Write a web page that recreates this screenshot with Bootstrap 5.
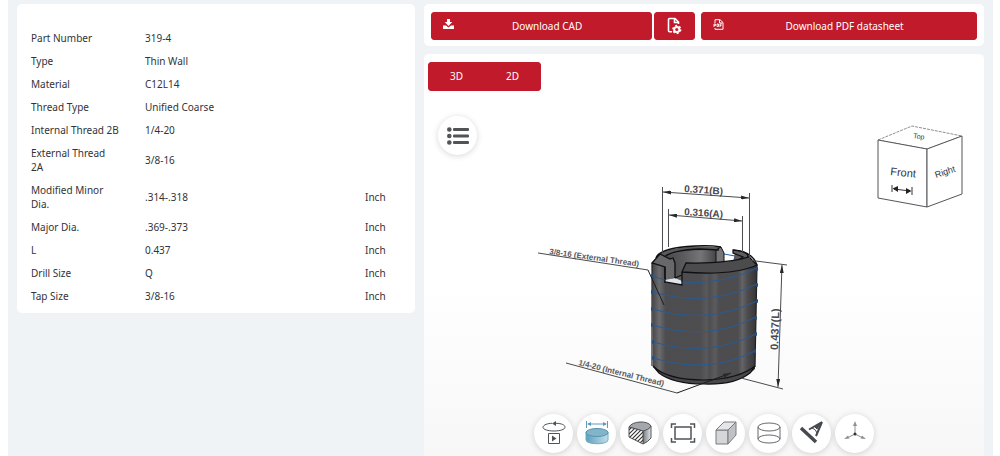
<!DOCTYPE html>
<html lang="en">
<head>
<meta charset="utf-8">
<meta name="viewport" content="width=device-width, initial-scale=1">
<title>Part 319-4</title>
<link rel="stylesheet" href="https://cdn.jsdelivr.net/npm/bootstrap@5.3.0/dist/css/bootstrap.min.css">
<style>
body{font:10px/14px "Noto Sans","Open Sans",sans-serif;color:#333337;background:#fff;padding:0 7px 0 8px}
.page-shell{background:#f0f3f6;min-height:100vh;padding:4px 9px 0;gap:9px}
.spec-pane{flex:0 0 41.16%;padding:23px 14px 5px;border-radius:5px}
.model-pane{flex:1 1 0;min-width:0;gap:8px}
.spec-table{width:100%;table-layout:fixed;color:inherit}
.spec-table th,.spec-table td{font-weight:400;padding:4px 0 5px;vertical-align:middle}
.spec-table .name-col{width:114px}
.spec-table th{padding-right:28px}
.spec-table .unit-col{width:36px}
.red-btn{--bs-btn-color:#fff;--bs-btn-bg:#c01a2b;--bs-btn-border-color:#c01a2b;--bs-btn-hover-color:#fff;--bs-btn-hover-bg:#a81323;--bs-btn-active-bg:#a81323;--bs-btn-active-color:#fff;--bs-btn-font-size:10px;--bs-btn-line-height:14px;--bs-btn-padding-y:6px;--bs-btn-padding-x:11px;--bs-btn-border-radius:3px}
.download-bar{padding:8px 7px 6px;border-radius:5px;gap:6px}
.cad-group{flex:0 0 48.4%;gap:2px}
.gear-btn{width:41px}
.viewer{border-radius:5px 5px 0 0;background:linear-gradient(#fff 55%,#f7f7f8)}
.viewer-tabs{padding:8px 4px 0}
.viewer-tabs .red-btn{width:57px;--bs-btn-line-height:15px;--bs-btn-padding-x:0}
.round-btn{width:39px;height:39px;padding:0;border:0;border-radius:50%;background:#fff;box-shadow:0 1px 6px rgba(0,0,0,.16)}
.menu-btn{left:14px;top:25px}
.view-cube{right:20px;top:34px}
.view-tools{bottom:3px;gap:4px}
svg text{font-family:"Liberation Sans",sans-serif}
.dim-text{font-weight:700;font-size:10px;fill:#48484c}
.length-text{font-size:11px}
.note-text{font-weight:700;font-size:8px;fill:#58585c}
</style>
</head>
<body>
<main class="page-shell d-flex align-items-start">
<section class="spec-pane bg-white">
<table class="spec-table">
<colgroup><col class="name-col"><col><col class="unit-col"></colgroup>
<tbody>
<tr><th scope="row">Part Number</th><td>319-4</td><td></td></tr>
<tr><th scope="row">Type</th><td>Thin Wall</td><td></td></tr>
<tr><th scope="row">Material</th><td>C12L14</td><td></td></tr>
<tr><th scope="row">Thread Type</th><td>Unified Coarse</td><td></td></tr>
<tr><th scope="row" class="text-nowrap">Internal Thread 2B</th><td>1/4-20</td><td></td></tr>
<tr><th scope="row">External Thread 2A</th><td>3/8-16</td><td></td></tr>
<tr><th scope="row">Modified Minor Dia.</th><td>.314-.318</td><td>Inch</td></tr>
<tr><th scope="row">Major Dia.</th><td>.369-.373</td><td>Inch</td></tr>
<tr><th scope="row">L</th><td>0.437</td><td>Inch</td></tr>
<tr><th scope="row">Drill Size</th><td>Q</td><td>Inch</td></tr>
<tr><th scope="row">Tap Size</th><td>3/8-16</td><td>Inch</td></tr>
</tbody>
</table>
</section>

<section class="model-pane d-flex flex-column">
<div class="download-bar bg-white d-flex">
<div class="cad-group d-flex">
<button type="button" class="btn red-btn d-flex flex-grow-1">
<svg width="11" height="11" viewBox="0 0 11 11" fill="#fff" aria-hidden="true"><path d="M4 0h3v3h2.3L5.500 7 1.700 3H4z"/><path d="M0 6.500h3l2.500 2 2.500-2h3V10H0z"/></svg>
<span class="flex-grow-1">Download CAD</span></button>
<button type="button" class="btn red-btn gear-btn p-0" aria-label="CAD settings">
<svg width="15" height="18" viewBox="0 0 15 18" fill="none" stroke="#fff" aria-hidden="true"><path d="M5 14.800H2.500q-1 0-1-1V2.500q0-1 1-1H8l3.500 3.500v2M7.500 1.500V5.500h4" stroke-width="1.600"/><circle cx="9.800" cy="12.500" r="2.600" stroke-width="2"/><circle cx="9.800" cy="12.500" r="3.900" stroke-width="1.500" stroke-dasharray="2 2.080"/></svg></button>
</div>
<button type="button" class="btn red-btn d-flex flex-grow-1">
<svg width="11" height="11" viewBox="0 0 11 11" fill="none" stroke="#fff" aria-hidden="true"><path d="M2 4V.700h5L10 3.500v6.800H2V9M6.500 1v3h3"/><path d="M1 5v3M1 5h1.500v1.500H1M4 5v2.500h1.500V5zM7 8V5h1.800M7 6.500h1.500" stroke-width=".9"/></svg>
<span class="flex-grow-1">Download PDF datasheet</span></button>
</div>

<div class="viewer">
<div class="viewer-tabs"><div class="btn-group d-flex" role="group" aria-label="View mode">
<button type="button" class="btn red-btn flex-grow-0">3D</button><button type="button" class="btn red-btn flex-grow-0">2D</button></div></div>
<div class="position-relative">
<svg class="d-block w-100" viewBox="424 91 560 365" role="img" aria-label="Threaded insert with dimensions">
<defs>
<linearGradient id="steel"><stop offset="0" stop-color="#454547"/><stop offset=".07" stop-color="#6c6c6e"/><stop offset=".13" stop-color="#4d4d50"/><stop offset=".46" stop-color="#4e4e51"/><stop offset=".52" stop-color="#59595c"/><stop offset=".55" stop-color="#4e4e51"/><stop offset=".6" stop-color="#5c5c5f"/><stop offset=".64" stop-color="#4d4d50"/><stop offset=".82" stop-color="#4d4d50"/><stop offset=".86" stop-color="#646467"/><stop offset=".91" stop-color="#4c4c4f"/><stop offset="1" stop-color="#343437"/></linearGradient>
<linearGradient id="bore"><stop offset="0" stop-color="#48484a"/><stop offset=".35" stop-color="#5a5a5d"/><stop offset=".7" stop-color="#757578"/><stop offset="1" stop-color="#464649"/></linearGradient>
<marker id="tip" viewBox="0 0 8 4" refX="8" refY="2" markerWidth="8" markerHeight="4" markerUnits="userSpaceOnUse" orient="auto-start-reverse"><path d="M0 0 8 2 0 4z" fill="#28282b"/></marker>
</defs>
<!-- bore and rear rim -->
<path d="M652 263 662 252Q686 244 721 247L724 253V262L733 263 732 251Q746 250 750 257L757 265 740 282H665z" fill="#59595c"/>
<path d="M665 257Q684 249 716 250L716 262 688 264 684 274 674 279 674 262z" fill="url(#bore)"/>
<path d="M721 247 724 253V262L733 263 735 252 730 245z" fill="#fff"/>
<path d="M724 254 735 256" stroke="#2762a5"/>
<path d="M716 250 721 247 724 253V263H716z" fill="#77777a" stroke="#111"/>
<path d="M733 250Q747 251 748 256 748 259 742 262L737 261 743 257 733 253z" fill="#5c5c5f" stroke="#111" stroke-width="1.200"/>
<path d="M656 258Q659 248 695 246 710 245 721 247M663 258Q671 250 700 249L719 250M733 250Q752 251 757 265" fill="none" stroke="#101012" stroke-width="1.400"/>
<!-- body -->
<path d="M652 263 665 267V282L682 285V272Q730 276 757 265L755 369Q743 382 710 384 670 383 653 367z" fill="url(#steel)"/>
<path d="M653 366Q667 380 704 380 739 379 755 366L750 373Q735 385 704 384 673 384 659 373z" fill="#48484b" stroke="#121214" stroke-width="1.200"/>
<path d="M652 263V366M757 265 755 367" stroke="#202024" stroke-width="1.200"/>
<!-- front chamfer -->
<path d="M682 272 686 263Q726 264 749 257L757 265Q733 276 682 272z" fill="#4c4c4f" stroke="#101012" stroke-width="1.300"/>
<path d="M652 263 660 254 670 259 673 258 675 263V278L665 282V267z" fill="#68686b" stroke="#101012" stroke-width="1.300"/>
<path d="M665 280 675 278 682 281V285L665 282z" fill="#dfe4e8"/>
<path d="M665 267V282L682 285V272M675 278 682 275" fill="none" stroke="#101012" stroke-width="1.300"/>
<!-- thread helix -->
<g fill="none" stroke="#275a96"><path d="M652 276 665 280M682 283Q730 283 757 268"/>
<path d="M652 292Q708 308 757 284M652 309Q708 325 757 301M652 325Q708 342 756 317M653 342Q708 358 756 334M653 358Q708 375 755 351"/></g>
<path fill="none" stroke="#234f86" stroke-width="2" stroke-linecap="round" d="M652 275v2M652 291v2M652 308v2M652 324v2M653 341v2M653 357v2M757 268v2M757 284v2M757 300v2M756 317v2M756 333v2M755 350v2"/>
<!-- dimension lines -->
<g fill="none" stroke="#4a4a4e"><path d="M662.500 187V253M749.500 193V262M668.500 209V247M742.500 216V252M748 260 787 265M741 378 783 389M538 253 648 270M566 363 677 393"/>
<path d="M663 192 749 198" marker-start="url(#tip)" marker-end="url(#tip)"/>
<path d="M669 215 742 221" marker-start="url(#tip)" marker-end="url(#tip)"/>
<path d="M782 265 778 387" marker-start="url(#tip)" marker-end="url(#tip)"/>
<path d="M648 270 664 305" stroke="#1c1c1f"/><path d="M677 393 731 373" stroke="#1c1c1f" marker-end="url(#tip)"/></g>
<g class="dim-text"><text transform="translate(684 192) rotate(4)">0.371(B)</text><text transform="translate(684 215) rotate(4)">0.316(A)</text><text class="length-text" transform="translate(778 350) rotate(-88)">0.437(L)</text></g>
<g class="note-text"><text transform="translate(549 254) rotate(8)">3/8-16 (External Thread)</text><text transform="translate(578 365) rotate(14)">1/4-20 (Internal Thread)</text></g>
</svg>

<button type="button" class="round-btn menu-btn position-absolute" aria-label="Menu"><svg width="22" height="18" viewBox="0 0 22 18" aria-hidden="true"><g fill="#505458"><circle cx="2.300" cy="2.500" r="2.300"/><circle cx="2.300" cy="9" r="2.300"/><circle cx="2.300" cy="15.500" r="2.300"/><rect x="6" y="1" width="16" height="3" rx="1"/><rect x="6" y="7.500" width="16" height="3" rx="1"/><rect x="6" y="14" width="16" height="3" rx="1"/></g></svg></button>

<svg class="view-cube position-absolute" width="88" height="84" viewBox="876 125 88 84" role="img" aria-label="View cube">
<path d="M878 140 912 126 962 136 927 149z" fill="#fff" stroke="#909094" stroke-dasharray="3 1"/><path d="M878 140 927 149V207L878 198z" fill="#fff" stroke="#55555a"/><path d="M927 149 962 136V194L927 207z" fill="#fff" stroke="#55555a"/>
<g fill="#333338"><text transform="translate(890 175) rotate(6)" font-size="11">Front</text><text transform="translate(936 178) rotate(-18)" font-size="9">Right</text><text transform="translate(913 138) rotate(8)" font-size="7">Top</text></g>
<path d="M892 185V192M912 187V195M894 189 910 191" stroke="#333338"/><path d="M892.500 188.500 898 186V192zM911.500 191 906 188V194z" fill="#222"/></svg>

<div class="view-tools position-absolute start-0 end-0 d-flex justify-content-center">
<button type="button" class="round-btn" aria-label="Animate"><svg width="26" height="26" viewBox="0 0 26 26" fill="none" stroke="#505458"><path d="M15 3.300C21 3.500 24 5 24 7.200 24 9.500 19 11 13 11S2 9.500 2 7.200 7 3.300 11 3.300"/><path d="M15 1v5l-4-2.500zM11 15.500 15.500 18.500 11 21.500z" fill="#505458" stroke="none"/><path d="M7.500 13.500h11v10h-11z"/></svg></button>
<button type="button" class="round-btn" aria-label="Dimensions"><svg width="26" height="26" viewBox="0 0 26 26" fill="none"><defs><linearGradient id="disc"><stop stop-color="#5f9fbc"/><stop offset="1" stop-color="#c0dfeb"/></linearGradient></defs><path d="M2 12V20C2 25 24 25 24 20V12z" fill="url(#disc)" stroke="#72aac3"/><ellipse cx="13" cy="12.500" rx="11" ry="4" fill="#82b4ca" stroke="#5795b0"/><path d="M2.500 1V8M23.500 1V8M4 4H22" stroke="#5e9db9"/><path d="M3 4 7 2V6zM23 4 19 2V6z" fill="#5e9db9"/></svg></button>
<button type="button" class="round-btn" aria-label="Section"><svg width="26" height="26" viewBox="0 0 26 26" stroke="#505458"><defs><linearGradient id="side"><stop stop-color="#777b80"/><stop offset="1" stop-color="#e5e7e9"/></linearGradient><clipPath id="cut"><path d="M2 7 16 11V24L2 17z"/></clipPath></defs><path d="M16 11 24 6V18Q21 22 16 24z" fill="url(#side)"/><path d="M2 7C5 1 21 0 24 6 23 9 19 10 16 11z" fill="#a4a8ac"/><path d="M2 7 16 11V24L2 17z" fill="#fff"/><path clip-path="url(#cut)" d="M0 12 8 4M0 16 12 4M0 20 16 4M2 22 18 6M4 24 18 10M7 25 18 14M10 26 18 18" stroke="#333" stroke-width="1.100"/></svg></button>
<button type="button" class="round-btn" aria-label="Fit to view"><svg width="26" height="24" viewBox="0 0 26 24" fill="none" stroke="#505458" stroke-width="1.500"><path d="M5 6H21V18H5zM1.500 7V3H6M20 3H24.500V7M24.500 17V21H20M6 21H1.500V17"/></svg></button>
<button type="button" class="round-btn" aria-label="Display style"><svg width="26" height="26" viewBox="0 0 26 26" stroke="#777a7e" stroke-linejoin="round"><path d="M3 10H15V24H3z" fill="#d4d6da"/><path d="M3 10 11 2H23L15 10z" fill="#e5e6e8"/><path d="M15 10 23 2V15L15 24z" fill="#bfc1c5"/></svg></button>
<button type="button" class="round-btn" aria-label="Wireframe"><svg width="26" height="26" viewBox="0 0 26 26" fill="none" stroke="#66696d"><ellipse cx="13" cy="7" rx="11" ry="4"/><ellipse cx="13" cy="19" rx="11" ry="4"/><path d="M2 7V19M24 7V19"/></svg></button>
<button type="button" class="round-btn" aria-label="Measure"><svg width="26" height="26" viewBox="0 0 26 26" fill="none" stroke="#46494d"><path d="M2 8 17 22" stroke-width="3.500"/><path d="M3.500 6 19 20.500" stroke="#fff" stroke-dasharray="1 1.500"/><path d="M23 2 10 9.500M23 2 17 16" stroke-width="2"/><path d="M23 2 18 9 16 7z" fill="#46494d"/><path d="M13 8Q17 9 18 13"/></svg></button>
<button type="button" class="round-btn" aria-label="Axes"><svg width="26" height="26" viewBox="0 0 26 26" fill="none" stroke="#8d9094"><path d="M13 14V4M13 14 5 18M13 14 21 18"/><path d="M13 1 15 6H11zM2 19 6 15.500 7.500 18.500zM24 19 20 15.500 18.500 18.500z" fill="#8d9094" stroke="none"/><circle cx="13" cy="14" r="1.500" fill="#333" stroke="none"/></svg></button>
</div>
</div>
</div>
</section>
</main>
<script src="https://cdn.jsdelivr.net/npm/bootstrap@5.3.0/dist/js/bootstrap.bundle.min.js"></script>
</body>
</html>
